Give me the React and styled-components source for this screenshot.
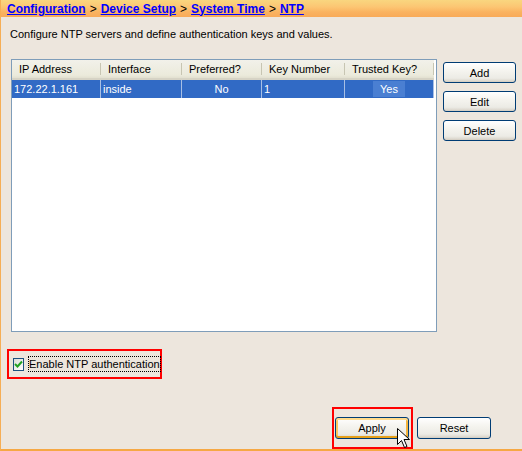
import React from "react";
import styled, { createGlobalStyle } from "styled-components";

const Global = createGlobalStyle`
  html, body { margin: 0; padding: 0; }
  body { font-family: "Liberation Sans", Arial, sans-serif; font-size: 11px; color: #000; }
`;

const Frame = styled.div`
  position: relative;
  width: 522px;
  height: 451px;
  box-sizing: border-box;
  background: #ede6dd;
  border-left: 1px solid #f6ae55;
  border-bottom: 2px solid #f6a844;
  display: flex;
  flex-direction: column;
  overflow: hidden;
`;

const Header = styled.div`
  height: 17px;
  flex: none;
  background: linear-gradient(#f9d67f 0%, #fcc673 40%, #fab360 70%, #f8aa58 100%);
  padding-left: 6px;
  display: flex;
  align-items: center;
  font-size: 12px;
  font-weight: bold;
  white-space: nowrap;
`;

const Crumb = styled.a`
  color: #0000ff;
  text-decoration: underline;
  cursor: pointer;
`;

const Sep = styled.span`
  font-weight: normal;
  color: #000;
  padding: 0 4px;
`;

const Description = styled.div`
  margin: 10px 0 0 9px;
  height: 14px;
  line-height: 14px;
`;

const Main = styled.div`
  display: flex;
  margin: 18px 0 0 10px;
  gap: 6px;
`;

const ListBox = styled.div`
  width: 426px;
  height: 273px;
  box-sizing: border-box;
  border: 1px solid #7f9db9;
  background: #fff;
`;

const Grid = styled.div`
  display: grid;
  grid-template-columns: 89px 81px 80px 83px 89px;
`;

const HeadCell = styled.div`
  height: 20px;
  box-sizing: border-box;
  display: flex;
  align-items: center;
  padding-left: 7px;
  background: linear-gradient(#f2f1ea 0%, #ebeadb 85%, #e2e0d0 100%);
  border-bottom: 2px solid #d6d3c5;
  position: relative;
  &::after {
    content: "";
    position: absolute;
    right: 0;
    top: 3px;
    bottom: 3px;
    width: 1px;
    background: #c7c5b2;
    box-shadow: 1px 0 0 #fff;
  }
`;

const Cell = styled.div`
  height: 18px;
  box-sizing: border-box;
  display: flex;
  align-items: center;
  justify-content: ${(p) => (p.$center ? "center" : "flex-start")};
  padding-left: ${(p) => (p.$center ? "0" : "2px")};
  background: #316ac5;
  color: #fff;
  border-right: 1px solid #a8bfe4;
`;

const FocusText = styled.span`
  background: #4a7fd2;
  padding: 0 7px;
  line-height: 16px;
`;

const ButtonColumn = styled.div`
  display: flex;
  flex-direction: column;
  gap: 8px;
  padding-top: 3px;
`;

const XpButton = styled.button`
  width: ${(p) => p.$w || 73}px;
  height: ${(p) => p.$h || 21}px;
  box-sizing: border-box;
  border: 1px solid #003c74;
  border-radius: 3px;
  background: linear-gradient(#ffffff 0%, #f5f4ef 40%, #ecebe5 80%, #d6d0c5 100%);
  font-family: "Liberation Sans", Arial, sans-serif;
  font-size: 11px;
  color: #000;
  padding: 0;
  box-shadow: ${(p) =>
    p.$hot
      ? "inset 0 2px 0 #ffdb8c, inset 0 -2px 0 #e5a01a, inset 2px 0 0 #fbc760, inset -2px 0 0 #f5b53f"
      : "inset 0 -1px 0 #d6d0c5"};
`;

const CheckRow = styled.div`
  align-self: flex-start;
  margin: 17px 0 0 6px;
  border: 2px solid #ff0000;
  height: 30px;
  width: 155px;
  box-sizing: border-box;
  display: flex;
  align-items: center;
  padding-left: 4px;
  gap: 4px;
`;

const CheckBox = styled.span`
  width: 13px;
  height: 13px;
  box-sizing: border-box;
  border: 1px solid #1c5180;
  background: linear-gradient(135deg, #dcdcd7, #ffffff);
  display: flex;
  align-items: center;
  justify-content: center;
`;

const CheckLabel = styled.span`
  border: 1px dotted #000;
  line-height: 14px;
  white-space: nowrap;
`;

const BottomBar = styled.div`
  margin-top: auto;
  display: flex;
  align-items: center;
  padding-left: 331px;
  gap: 4px;
  height: 42px;
`;

const HighlightBox = styled.div`
  position: relative;
  border: 2px solid #ff0000;
  width: 81px;
  height: 42px;
  box-sizing: border-box;
  padding: 8px 0 0 1px;
`;

const Cursor = styled.svg`
  position: absolute;
  left: 63px;
  top: 19px;
`;

const columns = ["IP Address", "Interface", "Preferred?", "Key Number", "Trusted Key?"];

export default function App() {
  return (
    <>
      <Global />
      <Frame>
        <Header>
          <Crumb>Configuration</Crumb>
          <Sep>&gt;</Sep>
          <Crumb>Device Setup</Crumb>
          <Sep>&gt;</Sep>
          <Crumb>System Time</Crumb>
          <Sep>&gt;</Sep>
          <Crumb>NTP</Crumb>
        </Header>
        <Description>Configure NTP servers and define authentication keys and values.</Description>
        <Main>
          <ListBox>
            <Grid>
              {columns.map((c) => (
                <HeadCell key={c}>{c}</HeadCell>
              ))}
              <Cell>172.22.1.161</Cell>
              <Cell>inside</Cell>
              <Cell $center>No</Cell>
              <Cell>1</Cell>
              <Cell $center>
                <FocusText>Yes</FocusText>
              </Cell>
            </Grid>
          </ListBox>
          <ButtonColumn>
            <XpButton>Add</XpButton>
            <XpButton>Edit</XpButton>
            <XpButton>Delete</XpButton>
          </ButtonColumn>
        </Main>
        <CheckRow>
          <CheckBox>
            <svg width="9" height="9" viewBox="0 0 9 9">
              <path d="M1 4 L3.5 6.5 L8 1.5" stroke="#21a121" strokeWidth="2" fill="none" />
            </svg>
          </CheckBox>
          <CheckLabel>Enable NTP authentication</CheckLabel>
        </CheckRow>
        <BottomBar>
          <HighlightBox>
            <XpButton $w={74} $h={22} $hot>Apply</XpButton>
            <Cursor width="14" height="22" viewBox="0 0 14 22">
              <path
                d="M0.5 0.5 L0.5 16.5 L4.5 12.5 L7.5 19.5 L10 18.5 L7 11.5 L12.5 11.5 Z"
                fill="#fff"
                stroke="#000"
                strokeWidth="1"
                strokeLinejoin="miter"
              />
            </Cursor>
          </HighlightBox>
          <XpButton $w={74} $h={22}>Reset</XpButton>
        </BottomBar>
      </Frame>
    </>
  );
}
